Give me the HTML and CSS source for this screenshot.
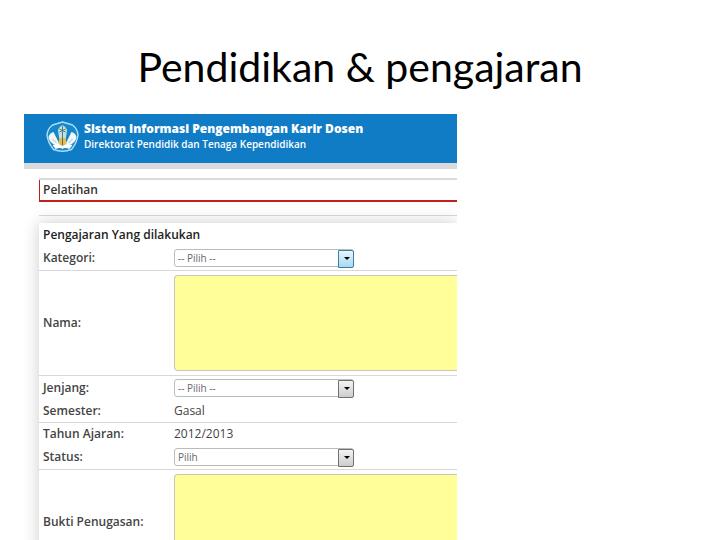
FILE: index.html
```html
<!DOCTYPE html>
<html lang="id">
<head>
  <meta charset="UTF-8" />
  <meta name="viewport" content="width=device-width, initial-scale=1.0"/>
  <title>Pendidikan &amp; pengajaran</title>
  <link rel="stylesheet" href="styles.css">
</head>
<body>

  <h1>Pendidikan &amp; pengajaran</h1>

  <div class="app">
    <header class="banner">
      <svg class="logo" viewBox="0 0 34 32" aria-hidden="true">
        <path d="M17 1 L27 4 Q32 8 32.500 14 Q31.500 22 26 28.500 Q17 32 8 28.500 Q2.500 22 1.500 14 Q2 8 7 4 Z" fill="#1688c9" stroke="#a9def5" stroke-width="1.500"/>
        <path d="M8 11 Q4 12 3 16 Q4 22 10 24 L15 25 L12 19 Z" fill="#f1f8f8"/>
        <path d="M26 11 Q30 12 31 16 Q30 22 24 24 L19 25 L22 19 Z" fill="#f1f8f8"/>
        <path d="M7 18 L11 22 M27 18 L23 22" stroke="#9fc4d2" fill="none"/>
        <path d="M17 4 Q11 7 13 13 L14 19 H20 L21 13 Q23 7 17 4 Z" fill="#c4e0da"/>
        <path d="M17 5 V17 M14 8 L20 11 M20 8 L14 11" stroke="#447f91" fill="none"/>
        <path d="M14 17 H20 L21 23 L17 25 L13 23 Z" fill="#e3bd55"/>
        <path d="M17 17 V24" stroke="#75613a"/>
        <path d="M7 24 Q13 22 17 25 Q21 22 27 24 L24 28 Q19 26 17 28 Q15 26 10 28 Z" fill="#fff"/>
      </svg>
      <div class="banner-text">
        <div class="banner-title">Sistem Informasi Pengembangan Karir Dosen</div>
        <div class="banner-sub">Direktorat Pendidik dan Tenaga Kependidikan</div>
      </div>
    </header>

    <main class="content">
      <h2 class="page-title">Pelatihan</h2>
      <div class="divider"></div>

      <form class="card">
        <h3>Pengajaran Yang dilakukan</h3>
        <div class="row line">
          <label for="kategori">Kategori:</label>
          <div class="select active">
            <select id="kategori"><option>-- Pilih --</option></select>
          </div>
        </div>
        <div class="row line">
          <label for="nama">Nama:</label>
          <textarea id="nama"></textarea>
        </div>
        <div class="row">
          <label for="jenjang">Jenjang:</label>
          <div class="select">
            <select id="jenjang"><option>-- Pilih --</option></select>
          </div>
        </div>
        <div class="row line">
          <span class="label">Semester:</span>
          <span>Gasal</span>
        </div>
        <div class="row">
          <span class="label">Tahun Ajaran:</span>
          <span>2012/2013</span>
        </div>
        <div class="row line">
          <label for="status">Status:</label>
          <div class="select">
            <select id="status"><option>Pilih</option></select>
          </div>
        </div>
        <div class="row">
          <label for="bukti">Bukti Penugasan:</label>
          <textarea id="bukti"></textarea>
        </div>
      </form>
    </main>
  </div>

</body>
</html>
```

FILE: styles.css
```css
* {
  box-sizing: border-box;
}

html {
  height: 100%;
  overflow: hidden;
}

body {
  display: flex;
  flex-direction: column;
  height: 100%;
  margin: 0;
  background: #fff;
  color: #444;
  font-family: "Open Sans", sans-serif;
  font-size: 12px;
}

h1 {
  margin: 0;
  padding: 39px 0 19px;
  color: #000;
  font-family: Lato, sans-serif;
  font-size: 41px;
  font-weight: 400;
  line-height: 56px;
  text-align: center;
}

.app {
  flex: 1;
  min-height: 0;
  margin: 0 calc(36% + 4px) 0 24px;
  overflow: hidden;
}

.banner {
  display: flex;
  align-items: flex-start;
  gap: 4px;
  height: 55px;
  padding: 7px 0 0 21px;
  background: #0f7cc5;
  border-bottom: 6px solid #dadadd;
}

.logo {
  width: 35px;
  height: 32px;
}

.banner-text {
  color: #fff;
  white-space: nowrap;
}

.banner-title {
  font-size: 12px;
  font-weight: 800;
  line-height: 16px;
}

.banner-sub {
  font-size: 10px;
  font-weight: 600;
  line-height: 14px;
}

.content {
  padding: 9px 0 0 15px;
}

.page-title {
  margin: 0;
  padding: 0 4px;
  border-top: 2px solid #dadadb;
  border-bottom: 2px solid #c2201b;
  box-shadow: inset 1px 0 #c2201b;
  color: #333;
  font-size: 12px;
  font-weight: 600;
  line-height: 20px;
}

.divider {
  height: 8px;
  margin-top: 13px;
  border-top: 1px solid #d8d8dc;
}

.card {
  background: #fff;
  box-shadow: 0 0 16px rgba(0, 0, 0, 0.2);
}

.card h3 {
  margin: 0;
  padding-left: 4px;
  color: #222;
  font-size: 12px;
  font-weight: 600;
  line-height: 23px;
}

.row {
  display: grid;
  grid-template-columns: 131px 1fr;
  align-items: center;
  padding: 2px 0 2px 4px;
  line-height: 18px;
}

.row label,
.row .label {
  font-weight: 600;
}

.line {
  border-bottom: 1px solid #d8d8dc;
}

.select {
  position: relative;
  width: 180px;
  height: 20px;
  padding: 1px 0;
}

.select select {
  display: block;
  width: 100%;
  height: 18px;
  padding: 0 3px;
  appearance: none;
  background: #fff;
  border: 1px solid #bbb;
  border-radius: 3px;
  color: #666;
  font-family: "Open Sans", sans-serif;
  font-size: 10px;
}

/* drop-down button */
.select::before {
  content: "";
  position: absolute;
  top: 2px;
  right: 0;
  width: 14px;
  height: 16px;
  background: linear-gradient(#f4f4f4, #ccc);
  border: 1px solid #707070;
  border-radius: 0 2px 2px 0;
  pointer-events: none;
}

.select::after {
  content: "";
  position: absolute;
  top: 9px;
  right: 4px;
  border: 3px solid transparent;
  border-top-color: #000;
  border-bottom: 0;
  pointer-events: none;
}

.select.active::before {
  background: linear-gradient(#e6f6fd, #a7d9f2);
  border-color: #3c7f9d;
}

textarea {
  display: block;
  width: 100%;
  height: 96px;
  margin: 2px 0;
  padding: 4px;
  background: #fffe99;
  border: 1px solid #c8c8b4;
  border-right: 0;
  border-radius: 4px 0 0 4px;
  resize: none;
}
```
